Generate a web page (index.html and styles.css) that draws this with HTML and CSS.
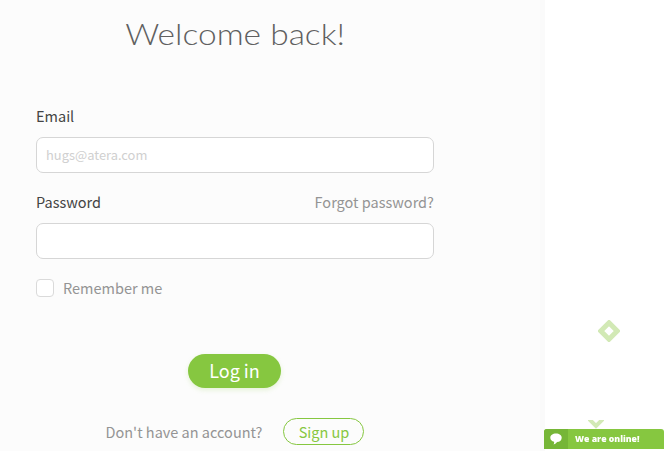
FILE: index.html
```html
<!DOCTYPE html>
<html lang="en">
<head>
<meta charset="utf-8">
<title>Log in</title>
<link rel="stylesheet" href="styles.css">
</head>
<body>
<div class="page">
  <main class="panel">
    <form class="login">
      <h1 class="title"><span class="title-text">Welcome back!</span></h1>
      <div class="row"><label for="email">Email</label></div>
      <input class="field" id="email" type="email" placeholder="hugs@atera.com">
      <div class="row row-password"><label for="password">Password</label><a class="muted">Forgot password?</a></div>
      <input class="field" id="password" type="password">
      <label class="remember muted"><input class="check" type="checkbox"><span>Remember me</span></label>
      <button class="submit" type="button">Log in</button>
      <div class="signup"><span class="muted">Don't have an account?</span><a class="signup-link">Sign up</a></div>
    </form>
  </main>
  <aside class="art">
    <svg class="diamond" viewBox="0 0 22 22"><path d="M11 2.8 19.2 11 11 19.2 2.8 11Z"/></svg>
    <svg class="tip" viewBox="0 0 16 9"><path d="M1 -1 8 6 15 -1"/></svg>
  </aside>
</div>
<div class="chat">
  <span class="chat-icon"><svg viewBox="0 0 12 12"><path d="M6 .5C9.3.5 11.7 2.1 11.7 4.8S9.6 9 7 9.1C6.4 10.3 5.2 11.2 3.6 11.4c.5-.8.7-1.7.5-2.6C1.8 8.3.3 6.9.3 4.8.3 2.1 2.7.5 6 .5Z"/></svg></span>
  <span class="chat-text">We are online!</span>
</div>
</body>
</html>
```
FILE: styles.css
```css
* { box-sizing: border-box; }
body {
  margin: 0;
  height: 451px;
  overflow: hidden;
  background: #fff;
  color: #444;
  font: 14.5px/24px "Noto Sans CJK SC", "Noto Sans", sans-serif;
}
.page { display: flex; height: 451px; }
.panel {
  width: 545px;
  padding-left: 36px;
  background: #fcfcfc;
  border-right: 5px solid #fafafa;
}
.login { display: flex; flex-direction: column; width: 398px; }
.title {
  margin: 14px 0 50px;
  height: 40px;
  font: 300 29px/40px Lato, sans-serif;
  color: #606060;
  text-align: center;
}
.title-text { display: inline-block; transform: scaleX(1.155); white-space: nowrap; }
.row { display: flex; justify-content: space-between; height: 24px; margin-bottom: 9px; }
.row-password { margin-top: 17px; }
.muted { color: #949494; }
.field {
  width: 100%;
  height: 36px;
  padding: 0 9px 2px;
  border: 1px solid #d6d6d6;
  border-radius: 7px;
  background: #fff;
  font: 12.9px/20px "Noto Sans CJK SC", sans-serif;
  outline: none;
}
.field::placeholder { color: #d0d0d0; opacity: 1; }
.remember { display: flex; align-items: center; gap: 9px; height: 24px; margin-top: 17px; }
.check {
  appearance: none;
  width: 18px;
  height: 18px;
  margin: 0;
  border: 1px solid #dadada;
  border-radius: 4px;
  background: #fff;
}
.submit {
  align-self: center;
  width: 93px;
  height: 34px;
  margin: 54px 1px 0 0;
  padding: 0 0 2px;
  border: 0;
  border-radius: 17px;
  background: #86c740;
  color: #fff;
  font: 18px/32px "Noto Sans CJK SC", sans-serif;
  box-shadow: 0 2px 5px rgba(134, 199, 64, .2);
}
.signup { display: flex; align-items: center; justify-content: center; gap: 21px; margin-top: 30px; height: 27px; }
.signup-link {
  width: 81px;
  height: 27px;
  border: 1px solid #86c740;
  border-radius: 14px;
  color: #86c740;
  line-height: 26px;
  text-align: center;
}
.art { display: flex; flex-direction: column; width: 121px; padding-top: 320px; }
.diamond { width: 22px; height: 22px; margin-left: 53px; fill: none; stroke: #d2e9b5; stroke-width: 5; }
.tip { width: 16px; height: 9px; margin: 78px 0 0 43px; fill: none; stroke: #d2e9b5; stroke-width: 4; }
.chat {
  position: fixed;
  left: 544px;
  top: 429px;
  display: flex;
  width: 120px;
  height: 20px;
  overflow: hidden;
  border-radius: 3px 3px 0 0;
  background: #86c740;
  color: #fff;
}
.chat-icon { display: flex; align-items: center; justify-content: center; width: 24px; background: #76b637; }
.chat-icon svg { width: 12px; height: 12px; fill: #fff; }
.chat-text { margin-left: 7px; font: 800 8.7px/20px "Open Sans", sans-serif; white-space: nowrap; }
```
